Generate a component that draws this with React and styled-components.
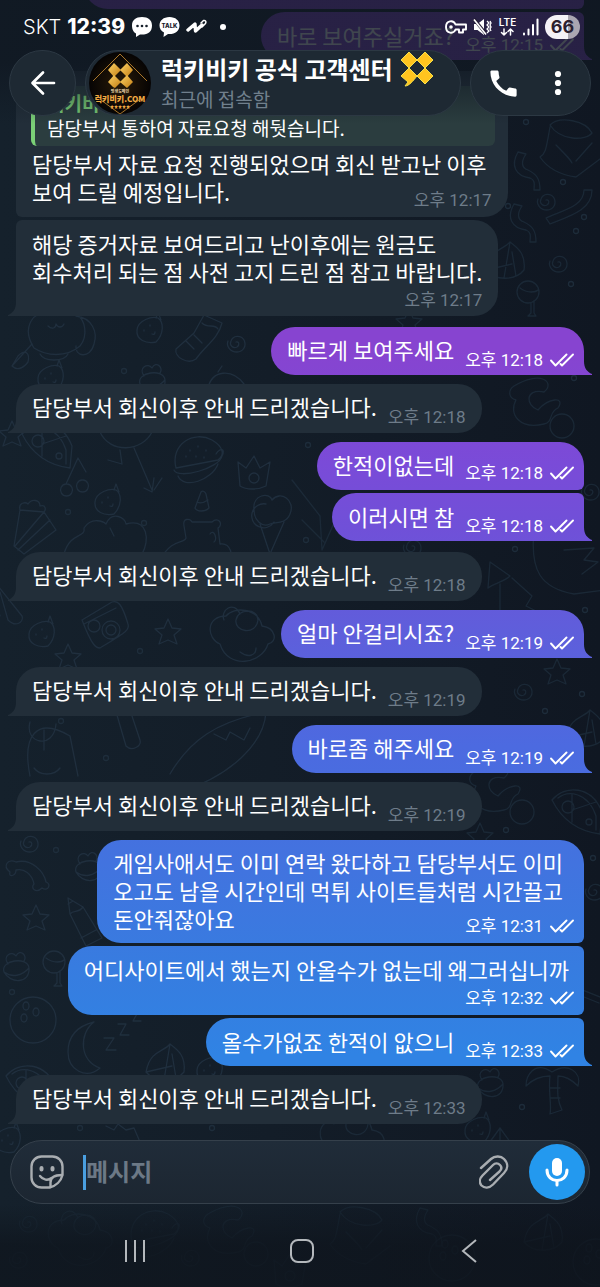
import React from 'react';
import styled, { createGlobalStyle, css } from 'styled-components';
import { MdCall } from 'react-icons/md';

const GlobalStyle = createGlobalStyle`
  * {
    box-sizing: border-box;
  }

  body {
    margin: 0;
    background: #111923;
    font-family: Roboto, "Noto Sans CJK KR", sans-serif;
    color: #ffffff;
  }

  button {
    display: flex;
    align-items: center;
    justify-content: center;
    padding: 0;
    border: 0;
    background: none;
    color: inherit;
    font: inherit;
  }

  svg {
    display: block;
    flex: none;
  }
`;

const outgoingFill = css`
  background: linear-gradient(
    #8744d0 27%,
    #7a4bd8 36%,
    #7050d8 41%,
    #5f5edb 49%,
    #4c6ae0 58%,
    #4273df 67%,
    #367de0 76%,
    #3083e4 82%
  ) fixed;
`;

const Screen = styled.div`
  position: relative;
  display: flex;
  flex-direction: column;
  min-height: 100vh;
  overflow: hidden;
  background: linear-gradient(90deg, #15212c 0%, #131d28 45%, #101722 100%);
`;

const Wallpaper = styled.svg`
  position: absolute;
  top: 0;
  left: 0;
  width: 100%;
  height: 100%;
  fill: none;
  stroke: #213140;
  stroke-width: 1.3;
  stroke-linecap: round;
  stroke-linejoin: round;
`;

const TopArea = styled.div`
  position: absolute;
  top: 0;
  left: 0;
  right: 0;
  z-index: 2;
  padding-bottom: 8px;
  background: linear-gradient(rgba(16, 24, 34, 0.8) 50%, rgba(16, 24, 34, 0));
`;

const StatusBar = styled.div`
  display: flex;
  align-items: center;
  justify-content: space-between;
  height: 50px;
  padding: 4px 20px 0 23px;
`;

const StatusGroup = styled.div`
  display: flex;
  align-items: center;
  gap: 6px;
`;

const Carrier = styled.span`
  font: 300 20px/28px Inter, sans-serif;
`;

const Clock = styled.span`
  font: 800 21px/28px Inter, sans-serif;
`;

const Battery = styled.span`
  width: 35px;
  height: 24px;
  border-radius: 12px;
  background: linear-gradient(90deg, #f4f2f7 66%, #aaa6b1 66%);
  color: #2b2130;
  font: 700 18px/24px Inter, sans-serif;
  text-align: center;
`;

const Header = styled.header`
  display: flex;
  gap: 9px;
  padding: 0 9px;
`;

const HeaderPill = styled.div`
  display: flex;
  align-items: center;
  height: 66px;
  border: 1px solid #2c3843;
  border-radius: 33px;
  background: #1e2933;
`;

const BackPill = styled(HeaderPill)`
  width: 67px;
  justify-content: center;
`;

const TitlePill = styled(HeaderPill)`
  flex: 1;
  gap: 10px;
  padding-left: 3px;
  white-space: nowrap;
`;

const TitleColumn = styled.div`
  padding-bottom: 4px;
`;

const ActionPill = styled(HeaderPill)`
  width: 121px;
  padding: 0 5px;

  button {
    flex: 1;
    height: 64px;
  }
`;

const Title = styled.h1`
  display: flex;
  align-items: center;
  gap: 7px;
  margin: 0;
  font-family: "Noto Sans CJK KR", sans-serif;
  font-size: 24px;
  line-height: 32px;
  font-weight: 700;
`;

const LastSeen = styled.p`
  margin: 0;
  color: #71808d;
  font-family: "Noto Sans CJK KR", sans-serif;
  font-size: 19px;
  line-height: 24px;
`;

const Messages = styled.ol`
  position: relative;
  z-index: 1;
  display: flex;
  flex: 1;
  flex-direction: column;
  margin: 0;
  padding: 0 16px;
  list-style: none;
`;

const Bubble = styled.li`
  position: relative;
  display: flex;
  max-width: 94%;
  flex-direction: ${({ $layout }) => ($layout === 'below' ? 'column' : 'row')};
  align-items: flex-end;
  column-gap: 11px;
  row-gap: 6px;
  margin-top: ${({ $gap }) => $gap}px;
  padding-top: ${({ $joinTop }) => ($joinTop ? 9 : 8)}px;

  ${({ $out, $joinTop, $joinBottom }) => ($out ? css`
    align-self: flex-end;
    padding-right: 10px;
    padding-bottom: ${$joinBottom ? 8 : 6}px;
    padding-left: 16px;
    border-radius: 24px ${$joinTop ? 6 : 24}px ${$joinBottom ? 6 : 0}px 24px;
    ${outgoingFill}
  ` : css`
    align-self: flex-start;
    padding-right: 16px;
    padding-bottom: ${$joinBottom ? 8 : 7}px;
    padding-left: 16px;
    border-radius: ${$joinTop ? 6 : 24}px 24px 24px ${$joinBottom ? 6 : 0}px;
    background: #222e39;
  `)}

  ${({ $layout }) => $layout === 'stack' && css`
    display: grid;

    > * {
      grid-area: 1 / 1;
    }
  `}

  &::after {
    content: "";
    display: ${({ $joinBottom }) => ($joinBottom ? 'none' : 'block')};
    position: absolute;
    bottom: 0;
    width: 8px;
    height: 14px;
    ${({ $out }) => ($out ? css`
      left: 100%;
      clip-path: path("M0 0C0 7 3 11 8 13V14H0Z");
      ${outgoingFill}
    ` : css`
      right: 100%;
      clip-path: path("M8 0C8 7 5 11 0 13V14H8Z");
      background: #222e39;
    `)}
  }
`;

/* tail end of a longer message that is scrolled off the top */
const ScrolledBubble = styled.li`
  align-self: flex-end;
  width: 88%;
  height: 48px;
  margin-top: -39px;
  border-radius: 24px 6px 6px 24px;
  ${outgoingFill}
`;

const TextColumn = styled.div`
  padding-right: ${({ $room }) => $room}px;
  padding-bottom: ${({ $bottom }) => $bottom}px;
`;

const MessageText = styled.p`
  margin: 0;
  font-family: "Noto Sans CJK KR", sans-serif;
  font-size: 22px;
  line-height: 28px;
  white-space: pre-line;
  word-break: keep-all;
`;

const Quote = styled.blockquote`
  margin: 7px -8px 3px -1px;
  padding: 4px 12px 6px;
  border-left: 4px solid #7bd077;
  border-radius: 6px;
  background: #2b3d3f;
  font-family: "Noto Sans CJK KR", sans-serif;
  font-size: 19px;
  line-height: 25px;
`;

const QuoteName = styled.strong`
  display: block;
  color: #7bd077;
`;

const Meta = styled.span`
  display: flex;
  align-items: center;
  align-self: flex-end;
  justify-self: end;
  gap: 7px;
  height: 18px;
  color: ${({ $out }) => ($out ? '#ffffff' : '#6e7c89')};
  font-size: 17px;
  line-height: 18px;
  white-space: nowrap;
`;

const Composer = styled.form`
  position: relative;
  z-index: 1;
  display: flex;
  align-items: center;
  height: 64px;
  margin: 14px 10px 0;
  padding: 0 4px 0 19px;
  border: 1px solid #35404b;
  border-radius: 32px;
  background: linear-gradient(#202c39, #1c2631);
  color: #a9adb1;
`;

const MessageInput = styled.input`
  flex: 1;
  min-width: 0;
  height: 35px;
  margin: 0 16px 0 19px;
  padding: 0 0 4px;
  border: 0;
  border-left: 3px solid #4a9fe0;
  outline: 0;
  background: none;
  color: #ffffff;
  font-family: "Noto Sans CJK KR", sans-serif;
  font-size: 24px;
  line-height: 30px;
  font-weight: 700;

  &::placeholder {
    color: #6c7986;
    opacity: 1;
  }
`;

const MicButton = styled.button`
  && {
    width: 56px;
    height: 56px;
    margin-left: 20px;
    border-radius: 28px;
    background: #2399ef;
    color: #ffffff;
  }
`;

const NavBar = styled.nav`
  position: relative;
  z-index: 1;
  display: grid;
  grid-template-columns: repeat(3, 28%);
  justify-content: center;
  height: 83px;
  padding: 11px 0 0 4px;
  background: linear-gradient(rgba(14, 20, 28, 0), rgba(14, 20, 28, 0.7) 50%);
  color: #b4b8bc;
`;

const SPIRAL = 'M0 0c3-1 4 3 1 5c-4 2-8-2-6-6c2-6 10-6 13-1c3 6-1 12-7 12c-7 0-11-6-9-11';
const STAR = 'M0-13L4-4L13-3L6 3L9 12L0 8L-9 12L-6 3L-13-3L-4-4Z';
const RIBBON = 'M0 0c-8 14-2 24 12 26c6 2 4 8 4 12h6c0-12-4-16-12-20c-8-3-6-10-2-16Z';
const PIZZA = 'M-24-8C-10-24 16-22 26 4L24 26C8 24-12 16-24-8ZM-18-10C-8-18 12-16 20 8V22M-4-14V14M-4 2L20-6M-14-1a6 6 0 1 0 12 0a6 6 0 1 0-12 0M10 14a3 3 0 1 0 6 0a3 3 0 1 0-6 0';
const TREAT = 'M-12 8C-16-4 12-8 13 4C14 20-6 20-12 8ZM-8 0C-14-8-4-14 0-8C4-16 12-8 8-3M-12 8C-4 14 6 12 13 4';
const BERRY = 'M-13 2C-12-8 2-12 8-10C14-6 14 6 6 14C-4 16-14 12-13 2ZM6-10L8-16L11-8M-6 2v1M0-3v1M2 6c2 1 3 0 3-2';
const CAT = 'M-26 30C-40 8-24-8-14-4C-10-16 12-16 16-4C26 2 28 18 20 28C6 40-14 38-26 30ZM-12 8c4 4 8 2 8-2c2 4 6 4 8 0M16-2C32 0 38 14 34 26C30 42 14 38 16 28M-20 36c4 8 24 8 28 0';
const MOON = 'M8-24C-8-12-6 16 14 22C0 34-18 24-18 6C-18-10-8-20 8-24Z';
const CONE = 'M-16-10C-18-26 0-28 2-20C10-30 26-20 20-6C16 4 6 2 0 4C-8 8-16 0-16-10ZM-10 4L0 34L14 2M-4-16a12 12 0 1 0 8 18';
const BURGER = 'M-22 8C-28-16-4-30 14-20C24-14 28-6 20 0L-22 8ZM-24 10C-20 20 22 8 24-4C28-12 22-12 18-6M-20 16c6 14 34 4 40-12M-8-10v1M0-14v1M8-10v1M-2-4v1M6-3v1M-12-4v1';
const CAMERA = 'M-22-6L8-24C14-26 18-22 24-2C26 4 22 6-4 22C-8 22-12 20-22-6ZM-20-2L12-18M-2 4a9 9 0 1 0 18 0a9 9 0 1 0-18 0M2 4a5 5 0 1 0 10 0a5 5 0 1 0-10 0M-16 0a6 6 0 1 0 12 0a6 6 0 1 0-12 0';
const DUCK = 'M-20 8C-34 2-34-20-14-20C-6-30 18-28 22-10C36-8 38 6 28 8C22 28-12 34-20 8ZM-4-16c-2 12 20 16 22 0c0-12-20-12-22 0M-16-16C-20-26-6-36 0-22M0 16c8 6 16 4 16-4';
const CROWN = 'M-16-10L-8-4L0-16L6-4L16-10L12 14C4 18-8 18-14 14ZM-5 6a5 5 0 1 0 10 0a5 5 0 1 0-10 0';
const BONE = 'M-18-8C-26-14-20-22-12-18C4-22 16-8 18 2C24 4 20 12 14 8C8 14 2 8 6 4C4-6-4-12-12-10C-12-4-20-2-18-8Z';
const PENCIL = 'M-18-26L-3-17L16 14L0 22L-16-10ZM-16-10C-12-15-8-10-3-17M-18-20l5-3M10 6L-5 14';
const SHELL = 'M-20 8C-16-14-2-12 4-20C12-14 20-8 18 8C10 18-10 20-20 8ZM-20 8L6 2M-2 16L4-20M10 14L6-10';
const CAKE = 'M-14-8C-16-16-8-16-6-14C-2-20 6-18 6-12C12-14 12-8 10-6L22 12L-10 36L-20 28L-14-8ZM-14-8L10-6M-19 28L10-6M-16 32L16 2';
const SOCK = 'M12-20L30-12C26 4 14 10 4 24C-4 30-18 22-16 14L2-2ZM10-12c6 6 12 0 16 6M-6 6l8 8M2 0l8 8';
const WORM = 'M-20-18C6-34 22-22 10-12C-10-16-8 2 4 6C14-6 32-8 24 4C14 8 20 18 10 20C-14 26-26 10-18-4C-26-6-26-14-20-18ZM16 22a12 12 0 1 0 24 0a12 12 0 1 0-24 0';
const PALM = 'M0 0c-18-12-26 4-26 14c8-8 16-10 24-10c-2 14 2 30 0 38l12-4c-6-12-4-22-4-34c8 0 14 4 20 10c4-14-10-24-26-14M-2 16h10M-2 26h10';
const BALL = 'M-23 0a23 23 0 1 0 46 0a23 23 0 1 0-46 0M-10-14a3 4 0 1 0 6 0a3 4 0 1 0-6 0M0-8a3 4 0 1 0 6 0a3 4 0 1 0-6 0M-12-2a3 4 0 1 0 6 0a3 4 0 1 0-6 0';
const LOLLY = 'M-11-4a11 11 0 1 0 22 0a11 11 0 1 0-22 0M-8-8C0-2 8-4 10-6M3 7v10l-3 3h8l-2-3V6';
const HAT = 'M-20-20C-10-30 16-24 22-12C16-4-10-4-20-20ZM-20-18C-24 4-24 8-30 12C-22 24-8 30 6 32L22 20L30 14M-14 0C-2 12 0 14 2 18M6 16L22-2';
const ZZZ = 'M-14 2h10l-8 12h10M0-12h8l-6 11h9M12-24h8l-5 9h8';

const doodles = [
  [HAT, 570, 145], [RIBBON, 518, 152], [RIBBON, 514, 204], [SPIRAL, 546, 200],
  ['M2 0c0 16-20 20-38 28l4 6c20-8 42-14 42-34Z', 582, 190], [SPIRAL, 558, 262],
  [SHELL, 506, 262], [LOLLY, 528, 296], [STAR, 409, 322],
  [CAT, 60, 318], [BERRY, 150, 328], [SOCK, 192, 335], [SPIRAL, 236, 342],
  ['M0 14L6 4C14-4 18 2 16 10C10 18 4 18 0 14L20-8', 12, 352], [BERRY, 51, 376],
  [TREAT, 152, 376], ['M-16 12C-12-6 8-8 20 8M-6-4l4-6', 224, 376], [WORM, 534, 404],
  [STAR, 12, 434], [PIZZA, 46, 442], ['M-8 20L4-6L12 8M-8 20a6 6 0 1 0 1 0M8 16a6 6 0 1 0 1 0', 74, 464],
  ['M-24-10C-14 12 18 10 28-10M-4 8L-2 22L-16 18M10 6L28 48M20 46l8 4l2-14M30 48l8-12', 124, 442],
  [BURGER, 198, 460], [CROWN, 254, 472], [CAKE, 34, 518],
  [BERRY, 108, 500], ['M-6 8L0-8C2-10 4-8 5-6L8 8C4 12-4 12-6 8ZM-4 2C0 4 4 2 7 0', 201, 500],
  ['M-42 30C-36 8-20 14-22 4C-14-8-2-2 0 0C6-14 20-6 20 0C42-6 44 16 36 30M4 4l4 8', 106, 524],
  ['M-46 32C-34 10-22 16-20 10L-22-2C-24-10-16-10-14-6H6C12-12 18-4 12 0L14 16C26 14 26 30 26 32M4 6c4-6 8 6 4 8', 206, 528],
  [CONE, 270, 520], ['M-30-40L-2-4L0 30M-20 0L2 22M0 30L16-6', 322, 520],
  [SPIRAL, 590, 490], [SPIRAL, 412, 546],
  ['M0-40C-4 0 6 18 40 24L70 20M30-20L60-22L50-10L64-8L48 4', 534, 570],
  ['M0 0L20 14C14 20 6 20-2 26ZM10 22V48M22 16L42 34L36 44L60 56', 490, 562],
  ['M-12 30L-20 4M-4 34L-12 6M-20 4L-30-20L10 30C12 36 4 42-4 34', 12, 586],
  [BERRY, 42, 632], [CAMERA, 104, 626], [STAR, 168, 632], [STAR, 68, 657],
  [DUCK, 240, 636], [STAR, 557, 672], [SPIRAL, 523, 690],
  ['M-14-10C-20 12 10 18 12-8M0-2v20M-10 36c6 8 20 8 26 0M-14 44c-8-40 6-60 40-40l8 40', 44, 732],
  ['M-14-20L0 28C6 34 16 28 14 22L0-20Z', 126, 718],
  ['M-40 40C-20 6 6-12 56-22C54 10 20 42-30 58M4 0l12 6l4-8l14 8l6-12', 210, 734],
  [PIZZA, 576, 808], [WORM, 494, 790], [SHELL, 586, 730], [STAR, 480, 836],
  [SPIRAL, 29, 842], [BONE, 28, 880], [STAR, 36, 918], [PENCIL, 86, 924],
  [TREAT, 88, 864], [TREAT, 16, 964], [LOLLY, 54, 966], [BALL, 33, 1020], [MOON, 86, 1046],
  [ZZZ, 118, 1036], [SPIRAL, 594, 890], ['M0 0l60 24M4 8l50 20', 545, 975],
  [PIZZA, 30, 1084], [TREAT, 490, 1080], [PALM, 552, 1072], [SHELL, 166, 1064],
  [BERRY, 210, 1068], [BERRY, 8, 1138], ['M-14-10l8 4l4-6l8 6l8-2l6 14', 120, 1136], [DUCK, 350, 1140],
  ['M0-14L16 8H-16ZM0-14V8', 500, 1142], [BERRY, 478, 1128],
];

const fadedDoodles = [
  [SPIRAL, 28, 1222], [DUCK, 78, 1240], [BURGER, 154, 1234], [SPIRAL, 18, 1258],
  [WORM, 228, 1232], [SPIRAL, 190, 1256], [HAT, 360, 1232], [RIBBON, 420, 1208],
  [BALL, 452, 1258], [SHELL, 544, 1234], [BALL, 596, 1262], [CROWN, 290, 1270],
];

const dots = [
  [526, 122], [563, 182], [576, 231], [508, 206], [584, 217], [571, 284], [124, 371],
  [308, 445], [574, 378], [68, 512], [144, 523], [306, 540], [140, 651], [582, 694],
  [545, 711], [585, 610], [515, 549], [61, 721], [56, 850], [12, 992], [593, 858],
  [506, 830], [522, 1107], [80, 1128], [212, 1128], [106, 758], [480, 640],
];

function ChatWallpaper() {
  return (
    <Wallpaper viewBox="0 0 600 1287" preserveAspectRatio="xMidYMin slice" aria-hidden="true">
      {doodles.map(([shape, x, y]) => (
        <path key={`${x}-${y}`} d={shape} transform={`translate(${x} ${y})`} opacity={x > 300 ? 0.65 : 0.9} />
      ))}
      {fadedDoodles.map(([shape, x, y]) => (
        <path key={`${x}-${y}`} d={shape} transform={`translate(${x} ${y})`} opacity="0.4" />
      ))}
      {dots.map(([x, y]) => (
        <circle key={`${x}-${y}`} cx={x} cy={y} r="2.5" opacity="0.8" />
      ))}
    </Wallpaper>
  );
}

function Checks() {
  return (
    <svg width="24" height="14" viewBox="0 0 24 14" fill="none" stroke="currentColor" strokeWidth="1.9" strokeLinecap="round" strokeLinejoin="round">
      <path d="M1 7.5L5.5 12.5L16.5 1.5M10.5 11L12 12.5L23 1.5" />
    </svg>
  );
}

function NoticeIcons() {
  return (
    <>
      <svg width="22" height="22" viewBox="0 0 22 22" fill="#fff">
        <path d="M11 1C4.8 1 1 4 1 9.5C1 14 3 16.5 5 17.5V21L9 18.5C17 19 21 16 21 9.5C21 4 17.2 1 11 1Z" />
        <g fill="#17202b">
          <circle cx="6.5" cy="10" r="1.3" />
          <circle cx="11" cy="10" r="1.3" />
          <circle cx="15.5" cy="10" r="1.3" />
        </g>
      </svg>
      <svg width="21" height="22" viewBox="0 0 21 22">
        <path fill="#fff" d="M10.5 1C4.500 1 0.500 4.500 0.500 9.500C0.500 12.800 2.300 15.200 5 16.500L4.500 21L9 18C16 18.500 20.500 15 20.500 9.500C20.500 4.500 16.500 1 10.500 1Z" />
        <text x="10.5" y="12" textAnchor="middle" fontFamily="Inter, sans-serif" fontSize="6" fontWeight="800" fill="#17202b">TALK</text>
      </svg>
      <svg width="21" height="16" viewBox="0 0 21 16" fill="none" stroke="#fff" strokeLinecap="round" strokeLinejoin="round">
        <path strokeWidth="3.4" d="M2 11L9 5L9.5 12L16 6" />
        <path strokeWidth="1.5" d="M15 4L17.5 1.5C19.500 1 20.500 2.500 19.500 4.500L16 8" />
      </svg>
    </>
  );
}

function SystemIcons() {
  return (
    <>
      <svg width="22" height="14" viewBox="0 0 22 14" fill="none" stroke="#fff" strokeWidth="1.9" strokeLinejoin="round">
        <path d="M10.5 4.500C8.500-.5 1 .5 1 7C1 13.500 8.500 14.500 10.500 9.500H14V12.500H18V9.500H21V4.500Z" />
        <circle cx="6" cy="7" r="1.8" fill="#fff" stroke="none" />
      </svg>
      <svg width="19" height="18" viewBox="0 0 19 18" fill="#fff">
        <path d="M1 6H4.500L11 1V17L4.500 12H1Z" />
        <path d="M1 1L13 16" stroke="#241c33" strokeWidth="3.2" />
        <path d="M1 1.500L13 16.500" stroke="#fff" strokeWidth="1.7" />
        <path d="M14 3l2 2l-2 2l2 2l-2 2l2 2l-2 2M17 3l1 2l-1 2l1 2l-1 2l1 2" fill="none" stroke="#fff" strokeWidth="1.3" />
      </svg>
      <svg width="19" height="20" viewBox="0 0 19 20" fill="none" stroke="#fff" strokeWidth="1.5" strokeLinecap="round" strokeLinejoin="round">
        <text x="9.5" y="9" textAnchor="middle" fontFamily="Inter, sans-serif" fontSize="10" fontWeight="600" fill="#fff" stroke="none">LTE</text>
        <path d="M6 12V18M3.500 15.500L6 18L8.500 15.500M12.500 18V12M10 14.500L12.500 12L15 14.500" />
      </svg>
      <svg width="16" height="18" viewBox="0 0 16 18" stroke="#fff" strokeWidth="2" strokeLinecap="round">
        <path d="M1 15.500V16.500M5.500 11.500V16.500M10 7V16.500M14.500 1.500V16.500" />
      </svg>
    </>
  );
}

function Avatar() {
  return (
    <svg width="62" height="62" viewBox="0 0 62 62" role="img" aria-label="럭키비키">
      <defs>
        <linearGradient id="gold" x1="0" y1="0" x2="1" y2="1">
          <stop offset="0" stopColor="#ffd467" />
          <stop offset="1" stopColor="#c27d12" />
        </linearGradient>
        <radialGradient id="coal">
          <stop offset="0" stopColor="#291b08" />
          <stop offset="1" stopColor="#060404" />
        </radialGradient>
      </defs>
      <circle cx="31" cy="31" r="31" fill="url(#coal)" />
      <path d="M31 2L58 29M31 2L4 29M12 48L31 62L50 48" fill="none" stroke="#a9762a" strokeWidth="1" />
      <g fill="url(#gold)">
        <path d="M25 11L32 18L25 25L19 18Z" />
        <path d="M38 11L44 18L38 25L31 18Z" />
        <path d="M25 23L32 30L26 36L24 35L19 30Z" />
        <path d="M38 23L44 30L38 36L31 30Z" />
      </g>
      <g fontFamily="Noto Sans CJK KR, sans-serif" textAnchor="middle" fontWeight="900">
        <text x="31" y="41" fontSize="4" fill="#d9c29a">평생도메인</text>
        <text x="31" y="50" fontSize="8" fill="#f0aa43">럭키비키.COM</text>
        <text x="31" y="57" fontSize="4" fill="#f0aa43">★★★★★</text>
      </g>
    </svg>
  );
}

function CloverIcon() {
  return (
    <svg width="34" height="36" viewBox="0 0 34 36" fill="#ffc41f" stroke="#f5e04a" strokeWidth="1">
      <path d="M9 1L17 9L9 17L1 9Z" />
      <path d="M25 1L33 9L25 17L17 9Z" />
      <path d="M9 17L17 25C13 30 9 35 5 35L8 31L1 25Z" />
      <path d="M25 17L33 25L25 33L17 25Z" />
    </svg>
  );
}

const REPLY = '담당부서 회신이후 안내 드리겠습니다.';

const messages = [
  { out: true, text: '바로 보여주실거죠?', time: '12:15', joinTop: true, gap: 3 },
  {
    text: '담당부서 자료 요청 진행되었으며 회신 받고난 이후\n보여 드릴 예정입니다.',
    time: '12:17',
    layout: 'stack',
    joinBottom: true,
    gap: 11,
    quote: { name: '럭키비키 공식 고객센터', text: '담당부서 통하여 자료요청 해둿습니다.' },
  },
  {
    text: '해당 증거자료 보여드리고 난이후에는 원금도\n회수처리 되는 점 사전 고지 드린 점 참고 바랍니다.',
    time: '12:17',
    layout: 'below',
    joinTop: true,
    gap: 3,
  },
  { out: true, text: '빠르게 보여주세요', time: '12:18', gap: 11 },
  { text: REPLY, time: '12:18' },
  { out: true, text: '한적이없는데', time: '12:18', joinBottom: true },
  { out: true, text: '이러시면 참', time: '12:18', joinTop: true, gap: 3 },
  { text: REPLY, time: '12:18', gap: 11 },
  { out: true, text: '얼마 안걸리시죠?', time: '12:19' },
  { text: REPLY, time: '12:19' },
  { out: true, text: '바로좀 해주세요', time: '12:19' },
  { text: REPLY, time: '12:19' },
  {
    out: true,
    text: '게임사애서도 이미 연락 왔다하고 담당부서도 이미\n오고도 남을 시간인데 먹튀 사이트들처럼 시간끌고\n돈안줘잖아요',
    time: '12:31',
    layout: 'stack',
    joinBottom: true,
  },
  {
    out: true,
    text: '어디사이트에서 했는지 안올수가 없는데 왜그러십니까',
    time: '12:32',
    layout: 'below',
    joinTop: true,
    joinBottom: true,
    gap: 3,
  },
  { out: true, text: '올수가없죠 한적이 앖으니', time: '12:33', joinTop: true, gap: 3 },
  { text: REPLY, time: '12:33' },
];

function textBottom({ out, layout, joinTop, joinBottom }) {
  if (layout === 'below') return 0;
  if (layout === 'stack') return out ? 3 : 4;
  return (joinBottom ? 4 : 6) - (joinTop ? 1 : 0);
}

function textRoom({ out, layout }) {
  if (layout === 'stack') return out ? 11 : 5;
  return out && layout === 'below' ? 5 : 0;
}

function Message({ message }) {
  const { out, text, time, layout, joinTop, joinBottom, quote, gap = 9 } = message;
  return (
    <Bubble $out={out} $layout={layout} $joinTop={joinTop} $joinBottom={joinBottom} $gap={gap}>
      <TextColumn $bottom={textBottom(message)} $room={textRoom(message)}>
        {quote && (
          <Quote>
            <QuoteName>{quote.name}</QuoteName>
            {quote.text}
          </Quote>
        )}
        <MessageText>{text}</MessageText>
      </TextColumn>
      <Meta $out={out}>
        <time>{`오후 ${time}`}</time>
        {out && <Checks />}
      </Meta>
    </Bubble>
  );
}

export default function App() {
  return (
    <Screen>
      <GlobalStyle />
      <ChatWallpaper />

      <TopArea>
        <StatusBar>
          <StatusGroup>
            <Carrier>SKT</Carrier>
            <Clock>12:39</Clock>
            <NoticeIcons />
            <svg width="26" height="6" viewBox="0 0 26 6" fill="#fff">
              <circle cx="10" cy="3" r="3" />
            </svg>
          </StatusGroup>
          <StatusGroup>
            <SystemIcons />
            <Battery>66</Battery>
          </StatusGroup>
        </StatusBar>

        <Header>
          <BackPill as="button" type="button" aria-label="뒤로">
            <svg width="26" height="26" viewBox="0 0 26 26" fill="none" stroke="#fff" strokeWidth="2.7" strokeLinecap="round" strokeLinejoin="round">
              <path d="M13 2.500L2.500 13L13 23.500M3 13H24" />
            </svg>
          </BackPill>
          <TitlePill>
            <Avatar />
            <TitleColumn>
              <Title>
                럭키비키 공식 고객센터
                <CloverIcon />
              </Title>
              <LastSeen>최근에 접속함</LastSeen>
            </TitleColumn>
          </TitlePill>
          <ActionPill>
            <button type="button" aria-label="전화">
              <MdCall size={35} />
            </button>
            <button type="button" aria-label="메뉴">
              <svg width="8" height="26" viewBox="0 0 8 26" fill="#fff">
                <circle cx="4" cy="4" r="3.1" />
                <circle cx="4" cy="13" r="3.1" />
                <circle cx="4" cy="22" r="3.1" />
              </svg>
            </button>
          </ActionPill>
        </Header>
      </TopArea>

      <Messages>
        <ScrolledBubble />
        {messages.map((message, index) => (
          <Message key={index} message={message} />
        ))}
      </Messages>

      <Composer onSubmit={(e) => e.preventDefault()}>
        <button type="button" aria-label="스티커">
          <svg width="34" height="34" viewBox="0 0 34 34" fill="none" stroke="currentColor" strokeWidth="2.4" strokeLinecap="round" strokeLinejoin="round">
            <path d="M32.500 20V11.500A10 10 0 0 0 22.500 1.500H11.500A10 10 0 0 0 1.500 11.500V22.500A10 10 0 0 0 11.500 32.500H19.500C26 31 31 26 32.500 20Z" />
            <path d="M20.500 32V27.500C20.500 23 24 20 32 20M10 21C13 25 18 26 21.500 23" />
            <path d="M11.500 13V14.500M22.500 13V14.500" strokeWidth="4" />
          </svg>
        </button>
        <MessageInput type="text" placeholder="메시지" aria-label="메시지" />
        <button type="button" aria-label="파일 첨부">
          <svg width="30" height="34" viewBox="0 0 30 34" fill="none" stroke="currentColor" strokeWidth="2.4" strokeLinecap="round" strokeLinejoin="round">
            <path d="M2 13L12 4C16 0.500 22 1 25 4C29.500 8.500 29 14 25 18L14 29.500C10 33.500 5.500 33.500 2.500 30.500C0 27.500 0.500 23.500 3.500 20.500L14 10C16 8 19 8 21 10C23 12 22.500 14.500 20.500 16.500L11 25" />
          </svg>
        </button>
        <MicButton type="button" aria-label="음성 메시지">
          <svg width="26" height="30" viewBox="0 0 26 30" fill="none" stroke="currentColor" strokeWidth="3" strokeLinecap="round">
            <path d="M13 6V14" strokeWidth="10" />
            <path d="M3 13C3 27 23 27 23 13M13 24V28" />
          </svg>
        </MicButton>
      </Composer>

      <NavBar>
        <button type="button" aria-label="최근 앱">
          <svg width="22" height="24" viewBox="0 0 22 24" stroke="currentColor" strokeWidth="2">
            <path d="M2 1V23M11 1V23M20 1V23" />
          </svg>
        </button>
        <button type="button" aria-label="홈">
          <svg width="24" height="24" viewBox="0 0 24 24" fill="none" stroke="currentColor" strokeWidth="2">
            <rect x="1" y="1" width="22" height="22" rx="7" />
          </svg>
        </button>
        <button type="button" aria-label="뒤로 가기">
          <svg width="16" height="24" viewBox="0 0 16 24" fill="none" stroke="currentColor" strokeWidth="2">
            <path d="M15 1L2 12L15 23" />
          </svg>
        </button>
      </NavBar>
    </Screen>
  );
}
